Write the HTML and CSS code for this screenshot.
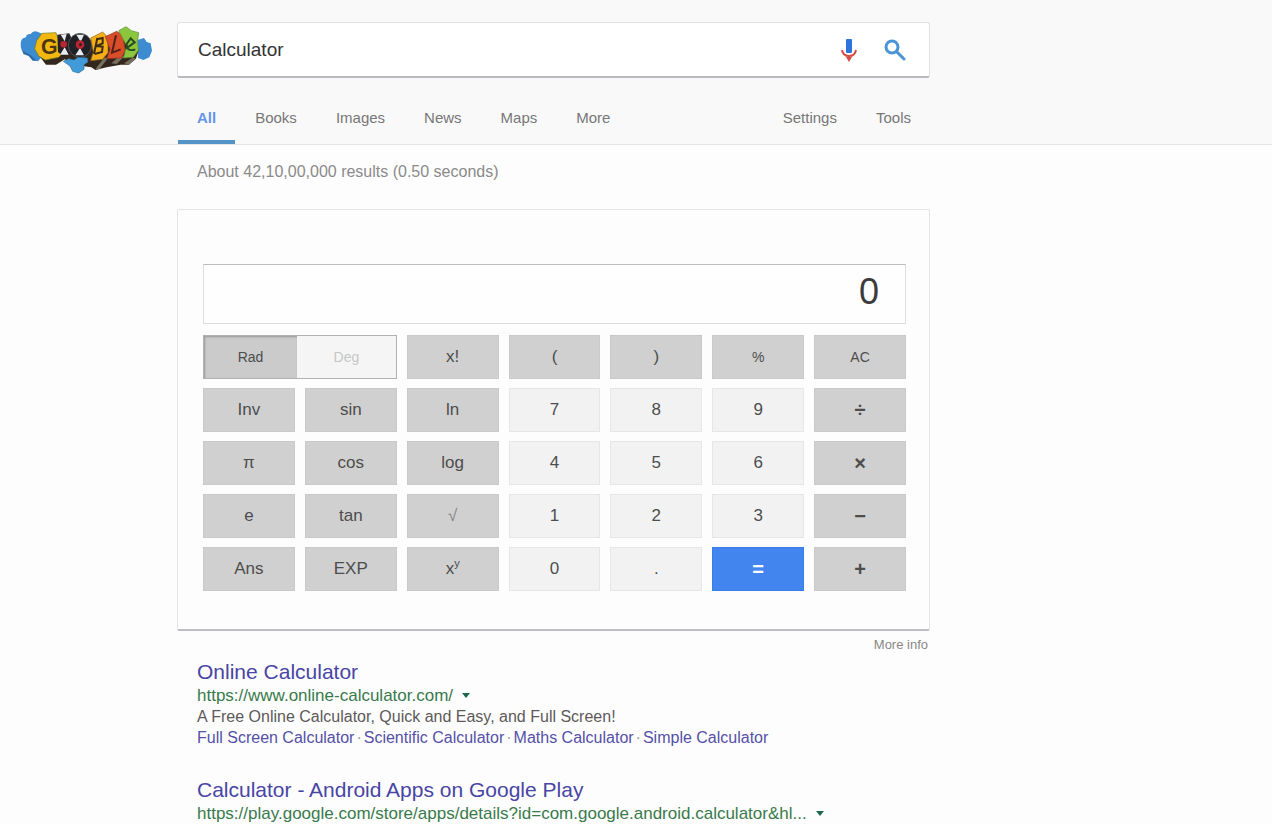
FILE: index.html
```html
<!DOCTYPE html>
<html lang="en">
<head>
    <meta charset="UTF-8">
    <meta name="viewport" content="width=device-width, initial-scale=1.0">
    <title>Calculator</title>
    <link rel="stylesheet" href="styles.css">
</head>
<body>
    <header class="header">
        <div class="search-row">
            <a href="#" class="logo" aria-label="Google">
                <svg width="134" height="50" viewBox="27 15 402 150">
                    <!-- blue cloud behind the letters -->
                    <path fill="#3d8bd0" d="M32 72 Q32 54 48 52 Q48 42 62 42 Q70 30 84 36 L98 42 L96 110 L84 124 L68 120 L58 106 L42 100 Q32 92 32 72Z"/>
                    <path fill="#2b6aa5" d="M38 92 L60 104 L80 122 L68 122 L56 108 L40 102Z"/>
                    <path fill="#3d8bd0" d="M382 60 L402 54 L410 66 L422 70 L426 92 L418 112 L400 120 L384 114Z"/>
                    <!-- letter sides -->
                    <path fill="#33261d" d="M82 100 L108 134 L138 134 L164 118 L190 134 L244 142 L256 150 L290 142 L332 134 L356 134 L378 116 L386 90 L370 60 L100 60Z"/>
                    <path fill="#77705f" d="M256 148 L282 114 L296 112 L268 148Z M304 130 L332 106 L344 108 L320 132Z M342 130 L366 114 L378 114 L358 134Z"/>
                    <path fill="#f3b80f" stroke="#6d7d20" stroke-width="2" d="M80 62 L96 40 L138 38 L144 56 L162 58 L160 96 L146 112 L106 120 L86 108 L74 86Z"/>
                    <path fill="#242226" d="M142 44 L178 40 L190 68 L182 102 L158 108 L144 96Z"/>
                    <path fill="#e9ecee" d="M152 44 L170 42 L164 64Z M150 104 L164 82 L176 104Z"/>
                    <circle cx="161" cy="73" r="10" fill="#b92530"/>
                    <ellipse cx="210" cy="76" rx="35" ry="36" fill="#202126" stroke="#63686c" stroke-width="2"/>
                    <path fill="#e9ecee" d="M199 44 L222 44 L212 66Z M196 106 L210 84 L222 106Z"/>
                    <circle cx="210" cy="74" r="13" fill="#b92530"/>
                    <path fill="#332023" d="M206 72 L214 68 L216 76 L209 80Z"/>
                    <path fill="#f5ae15" stroke="#8b6821" stroke-width="2" d="M242 54 L278 36 L294 52 L294 98 L278 118 L242 122 L250 96Z"/>
                    <path fill="#d94e29" stroke="#8d3420" stroke-width="2" d="M286 50 L320 34 L338 46 L346 92 L334 114 L290 116 L300 88Z"/>
                    <path fill="#8bc63e" stroke="#548c31" stroke-width="2" d="M326 32 L348 20 L364 32 L386 38 L382 68 L386 90 L370 112 L340 114 L350 78Z"/>
                    <!-- letter details -->
                    <text class="logo-text" x="93" y="102" font-size="64">G</text>
                    <path fill="none" stroke="#3b2c17" stroke-width="6" d="M262 54 L252 102 M264 57 L278 54 L278 70 L259 78 L278 80 L276 96 L254 102"/>
                    <path fill="none" stroke="#51211a" stroke-width="6" d="M318 46 L306 98 L332 88"/>
                    <path fill="none" stroke="#294b20" stroke-width="6" d="M348 86 L374 67 L362 55 L350 72 Q350 97 376 88"/>
                    <!-- front drip -->
                    <path fill="#409bd8" stroke="#2d6b91" stroke-width="2" d="M160 124 L176 116 L192 120 L204 112 L232 114 L234 126 L222 134 L222 148 L206 159 L188 154 L180 138Z"/>
                </svg>
            </a>
            <form class="search-box">
                <input type="text" class="search-input" value="Calculator" aria-label="Search">
                <button type="button" class="icon-button" aria-label="Search by voice">
                    <svg width="18" height="24" viewBox="0 0 18 24">
                        <rect x="6" y="1" width="6" height="14" rx="1" fill="#2f74dc"/>
                        <path d="M2 12 Q3 18 9 18 Q15 18 16 12" fill="none" stroke="#d94b45" stroke-width="2"/>
                        <path d="M6 19 L12 19 L9 24Z" fill="#d94b45"/>
                    </svg>
                </button>
                <button type="button" class="icon-button" aria-label="Search">
                    <svg width="22" height="22" viewBox="0 0 22 22" fill="none" stroke="#4a94d4">
                        <circle cx="8" cy="8" r="6" stroke-width="3"/>
                        <path d="M13 13 L20 20" stroke-width="3" stroke-linecap="round"/>
                    </svg>
                </button>
            </form>
        </div>
        <nav class="tabs">
            <a href="#" class="tab active">All</a>
            <a href="#" class="tab">Books</a>
            <a href="#" class="tab">Images</a>
            <a href="#" class="tab">News</a>
            <a href="#" class="tab">Maps</a>
            <a href="#" class="tab">More</a>
            <a href="#" class="tab tab-right">Settings</a>
            <a href="#" class="tab">Tools</a>
        </nav>
    </header>

    <main class="content">
        <p class="stats">About 42,10,00,000 results (0.50 seconds)</p>

        <section class="calculator">
            <input type="text" class="display" id="display" value="0" aria-label="Result" readonly>
            <div class="keys">
                <div class="toggle">
                    <button class="key small pressed">Rad</button>
                    <button class="key small off">Deg</button>
                </div>
                <button class="key">x!</button>
                <button class="key">(</button>
                <button class="key">)</button>
                <button class="key small">%</button>
                <button class="key small">AC</button>

                <button class="key">Inv</button>
                <button class="key">sin</button>
                <button class="key">ln</button>
                <button class="key number">7</button>
                <button class="key number">8</button>
                <button class="key number">9</button>
                <button class="key operator">÷</button>

                <button class="key">π</button>
                <button class="key">cos</button>
                <button class="key">log</button>
                <button class="key number">4</button>
                <button class="key number">5</button>
                <button class="key number">6</button>
                <button class="key operator">×</button>

                <button class="key">e</button>
                <button class="key">tan</button>
                <button class="key root">√</button>
                <button class="key number">1</button>
                <button class="key number">2</button>
                <button class="key number">3</button>
                <button class="key operator">−</button>

                <button class="key">Ans</button>
                <button class="key">EXP</button>
                <button class="key">x<sup>y</sup></button>
                <button class="key number">0</button>
                <button class="key number">.</button>
                <button class="key equals">=</button>
                <button class="key operator">+</button>
            </div>
        </section>
        <a href="#" class="more-info">More info</a>

        <article class="result">
            <h3><a href="#">Online Calculator</a></h3>
            <div class="url"><cite>https://www.online-calculator.com/</cite><span class="arrow"></span></div>
            <p class="snippet">A Free Online Calculator, Quick and Easy, and Full Screen!</p>
            <div class="sitelinks">
                <a href="#">Full Screen Calculator</a><span>·</span>
                <a href="#">Scientific Calculator</a><span>·</span>
                <a href="#">Maths Calculator</a><span>·</span>
                <a href="#">Simple Calculator</a>
            </div>
        </article>

        <article class="result">
            <h3><a href="#">Calculator - Android Apps on Google Play</a></h3>
            <div class="url"><cite>https://play.google.com/store/apps/details?id=com.google.android.calculator&amp;hl...</cite><span class="arrow"></span></div>
        </article>
    </main>
</body>
</html>
```

FILE: styles.css
```css
* {
    box-sizing: border-box;
}

body {
    margin: 0;
    font-family: "Liberation Sans", Arial, sans-serif;
    font-size: 16px;
    background-color: #fdfdfd;
    color: #555;
}

a {
    text-decoration: none;
}

.header {
    background-color: #f9f9fa;
    border-bottom: 1px solid #e6e4e9;
}

.search-row {
    display: flex;
    align-items: center;
    gap: 24px;
    max-width: 930px;
    padding: 22px 0 0 19px;
}

.logo,
.logo svg {
    display: block;
}

.logo-text {
    font-weight: bold;
    fill: #4b3513;
}

.search-box {
    flex: 1;
    display: flex;
    align-items: center;
    gap: 26px;
    height: 56px;
    padding: 0 23px 0 20px;
    background-color: #fff;
    border: 1px solid #e2dfe4;
    border-bottom: 2px solid #b9b9be;
    border-radius: 3px;
}

.search-input {
    flex: 1;
    min-width: 0;
    padding: 0;
    border: none;
    outline: none;
    background: none;
    font-family: inherit;
    font-size: 19px;
    color: #333;
}

.icon-button {
    display: flex;
    padding: 0;
    border: none;
    background: none;
    cursor: pointer;
}

.tabs {
    display: flex;
    gap: 1px;
    max-width: 753px;
    margin-left: 177px;
    padding-left: 1px;
}

.tab {
    height: 66px;
    padding: 30px 19px 0;
    font-size: 15px;
    line-height: 20px;
    color: #777;
}

.tab.active {
    color: #6495e8;
    font-weight: bold;
    border-bottom: 4px solid #5594c9;
}

.tab-right {
    margin-left: auto;
}

.content {
    max-width: 753px;
    margin-left: 177px;
}

.stats {
    margin: 0;
    padding: 16px 20px 27px;
    line-height: 21px;
    color: #8a8a8a;
}

.calculator {
    padding: 54px 23px 38px 25px;
    border: 1px solid #e4e3e8;
    border-bottom: 2px solid #bfbdc2;
    border-radius: 2px;
}

.display {
    display: block;
    width: 100%;
    height: 60px;
    padding: 0 26px 5px;
    border: 1px solid #dddce0;
    border-top-color: #bdbcc0;
    background-color: #fefefe;
    font-family: inherit;
    font-size: 36px;
    text-align: right;
    color: #3c3c3c;
    outline: none;
}

.keys {
    display: grid;
    grid-template-columns: repeat(7, 1fr);
    gap: 9px 10px;
    margin-top: 11px;
}

.key {
    height: 44px;
    padding: 0;
    border: 1px solid #c9c9c9;
    background-color: #d0d0d0;
    font-family: inherit;
    font-size: 17px;
    color: #4d4d4d;
    cursor: pointer;
}

.key sup {
    font-size: 11px;
    line-height: 1px;
}

.small {
    font-size: 14px;
}

.number {
    background-color: #f2f2f3;
    border-color: #e6e6e8;
}

.operator {
    font-size: 20px;
    font-weight: bold;
}

.root {
    color: #858585;
}

.equals {
    background-color: #4285ee;
    border-color: #3b7de6;
    color: #fff;
    font-size: 20px;
    font-weight: bold;
}

.toggle {
    grid-column: span 2;
    display: flex;
    border: 1px solid #b2b2b5;
}

.toggle .key {
    flex: 1;
    height: 42px;
    border: none;
}

.toggle .pressed {
    background-color: #cbcbcb;
    box-shadow: inset 1px 1px 2px #999;
}

.toggle .off {
    flex-grow: 1.06;
    background-color: #f5f5f6;
    color: #c8c5c8;
}

.more-info {
    display: block;
    padding: 5px 2px 0;
    text-align: right;
    font-size: 13px;
    line-height: 18px;
    color: #888;
}

.result {
    margin-bottom: 24px;
    padding: 5px 20px 0;
}

.result h3 {
    margin: 0;
    font-size: 21px;
    font-weight: normal;
    line-height: 26px;
}

.result h3 a {
    color: #4845a5;
}

.result:last-child {
    margin-bottom: 0;
}

.url {
    display: flex;
    align-items: center;
    gap: 9px;
    font-size: 17px;
    line-height: 21px;
    color: #397a4c;
}

.url cite {
    font-style: normal;
    white-space: nowrap;
}

.arrow {
    border: 4px solid transparent;
    border-top: 5px solid #1d6650;
    border-bottom: none;
}

.snippet {
    margin: 0;
    line-height: 21px;
    color: #5d5959;
}

.sitelinks {
    display: flex;
    gap: 2px;
    line-height: 21px;
    color: #999;
}

.sitelinks a {
    color: #5450a8;
}
```
